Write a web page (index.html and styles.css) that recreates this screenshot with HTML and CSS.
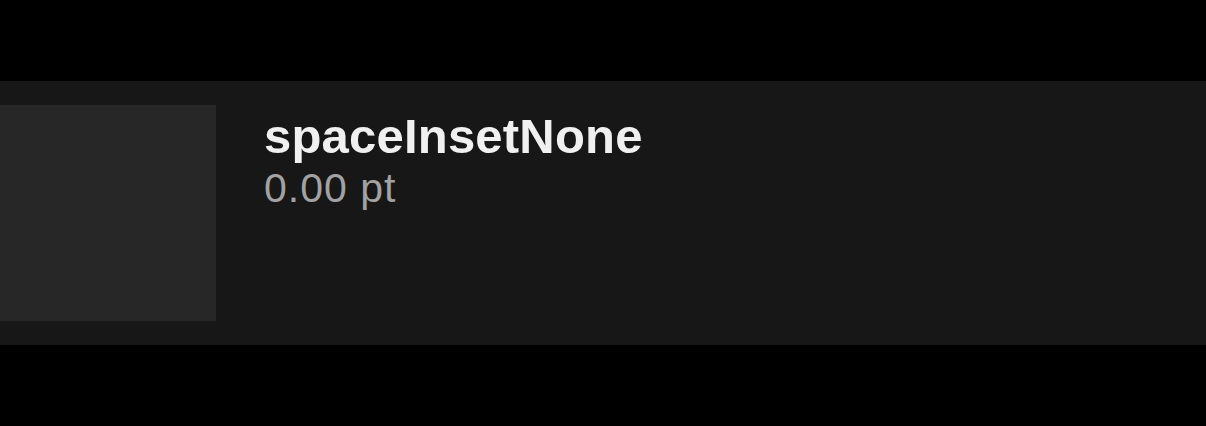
FILE: index.html
```html
<!DOCTYPE html>
<html>
<head>
<meta charset="utf-8">
<link rel="stylesheet" href="styles.css">
</head>
<body>
<div class="page">
  <div class="row">
    <div class="swatch"></div>
    <div class="info">
      <div class="title">spaceInsetNone</div>
      <div class="value">0.00 pt</div>
    </div>
  </div>
</div>
</body>
</html>
```

FILE: styles.css
```css
html, body {
  margin: 0;
  padding: 0;
  background: #000;
}
.page {
  width: 1206px;
  height: 426px;
  padding-top: 81px;
  box-sizing: border-box;
  font-family: "Liberation Sans", Arial, sans-serif;
}
.row {
  height: 264px;
  background: #171717;
  box-sizing: border-box;
  padding: 24px 0;
  display: flex;
  gap: 48px;
}
.swatch {
  width: 216px;
  height: 216px;
  background: #272727;
  flex: none;
}
.info {
  padding-top: 3px;
  display: flex;
  flex-direction: column;
}
.title {
  font-size: 49px;
  line-height: 56px;
  font-weight: bold;
  letter-spacing: 0.2px;
  color: #f0f0f0;
}
.value {
  font-size: 41px;
  line-height: 48px;
  letter-spacing: 1px;
  color: #a2a2a2;
}
```
